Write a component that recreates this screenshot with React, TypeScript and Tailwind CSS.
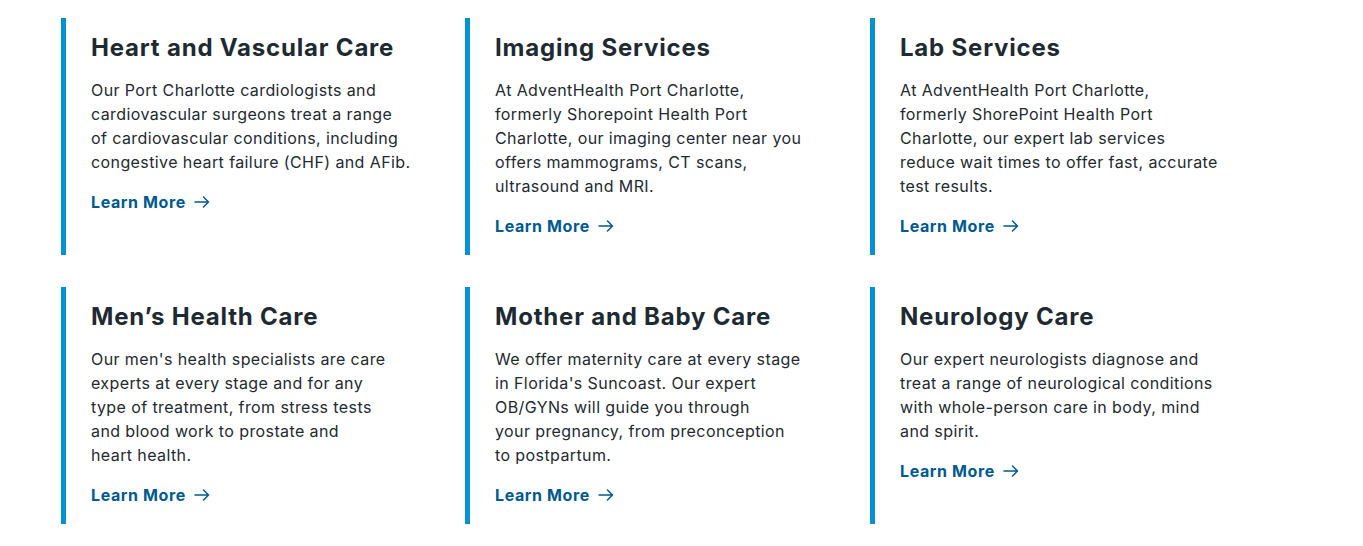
import React from "react";

type Card = { title: string; lines: string[] };

const cards: Card[] = [
  {
    title: "Heart and Vascular Care",
    lines: [
      "Our Port Charlotte cardiologists and",
      "cardiovascular surgeons treat a range",
      "of cardiovascular conditions, including",
      "congestive heart failure (CHF) and AFib.",
    ],
  },
  {
    title: "Imaging Services",
    lines: [
      "At AdventHealth Port Charlotte,",
      "formerly Shorepoint Health Port",
      "Charlotte, our imaging center near you",
      "offers mammograms, CT scans,",
      "ultrasound and MRI.",
    ],
  },
  {
    title: "Lab Services",
    lines: [
      "At AdventHealth Port Charlotte,",
      "formerly ShorePoint Health Port",
      "Charlotte, our expert lab services",
      "reduce wait times to offer fast, accurate",
      "test results.",
    ],
  },
  {
    title: "Men’s Health Care",
    lines: [
      "Our men's health specialists are care",
      "experts at every stage and for any",
      "type of treatment, from stress tests",
      "and blood work to prostate and",
      "heart health.",
    ],
  },
  {
    title: "Mother and Baby Care",
    lines: [
      "We offer maternity care at every stage",
      "in Florida's Suncoast. Our expert",
      "OB/GYNs will guide you through",
      "your pregnancy, from preconception",
      "to postpartum.",
    ],
  },
  {
    title: "Neurology Care",
    lines: [
      "Our expert neurologists diagnose and",
      "treat a range of neurological conditions",
      "with whole-person care in body, mind",
      "and spirit.",
    ],
  },
];

function Arrow() {
  return (
    <svg width="16" height="12" viewBox="0 0 16 12" fill="none" className="ml-[8px]">
      <path d="M1 6H14.5M9.5 1L14.5 6L9.5 11" stroke="#005a8f" strokeWidth="1.5" strokeLinecap="round" strokeLinejoin="round" />
    </svg>
  );
}

export default function App() {
  return (
    <div
      className="w-[1363px] h-[546px] bg-white pt-[18px] pl-[61px]"
      style={{ fontFamily: "Inter, 'Noto Sans', sans-serif" }}
    >
      <div className="grid grid-cols-[404px_405px_404px] gap-y-[32px]">
        {cards.map((c) => (
          <div key={c.title} className="border-l-[5px] border-[#0092d3] pl-[25px] pt-[15px] pb-[17px]">
            <h2 className="text-[24px] leading-[29px] font-bold tracking-[0.8px] text-[#1e2a31] whitespace-nowrap">
              {c.title}
            </h2>
            <p className="mt-[16px] text-[16px] leading-[24px] tracking-[0.4px] text-[#222a2f] whitespace-nowrap">
              {c.lines.map((l, i) => (
                <React.Fragment key={i}>
                  {l}
                  {i < c.lines.length - 1 && <br />}
                </React.Fragment>
              ))}
            </p>
            <a
              href="#"
              className="mt-[16px] flex items-center h-[24px] text-[16px] font-bold tracking-[0.6px] text-[#005a8f]"
            >
              Learn More
              <Arrow />
            </a>
          </div>
        ))}
      </div>
    </div>
  );
}
